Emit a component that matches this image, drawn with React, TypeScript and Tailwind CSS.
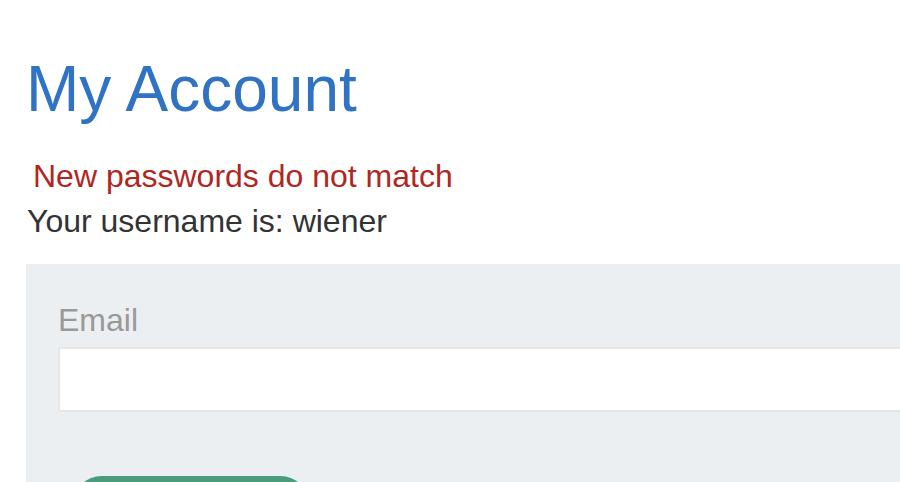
export default function App() {
  return (
    <div className="w-[900px] h-[482px] overflow-hidden bg-white font-['Liberation_Sans',Arial,sans-serif]">
      <div className="pl-[26px] w-[1100px]">
        <h1 className="mt-[57px] text-[64px] leading-[64px] text-[#3072c4]">My Account</h1>
        <p className="mt-[37px] pl-[7px] text-[32px] leading-[36px] text-[#b0271f]">
          New passwords do not match
        </p>
        <p className="mt-[9px] pl-[1px] text-[32px] leading-[36px] text-[#333333]">
          Your username is: wiener
        </p>
        <form className="mt-[25px] bg-[#ebeff2] pt-[38px] pl-[32px] pb-10">
          <label className="block text-[32px] leading-[36px] text-[#999999]">Email</label>
          <input
            type="email"
            className="mt-[9px] block w-full h-[65px] bg-white border-2 border-[#e6e6e6] outline-none"
          />
          <button
            type="button"
            className="mt-[64px] ml-[14px] w-[238px] h-[60px] rounded-[30px] bg-[#4a9a7c] text-white text-[28px]"
          >
            Update email
          </button>
        </form>
      </div>
    </div>
  );
}
